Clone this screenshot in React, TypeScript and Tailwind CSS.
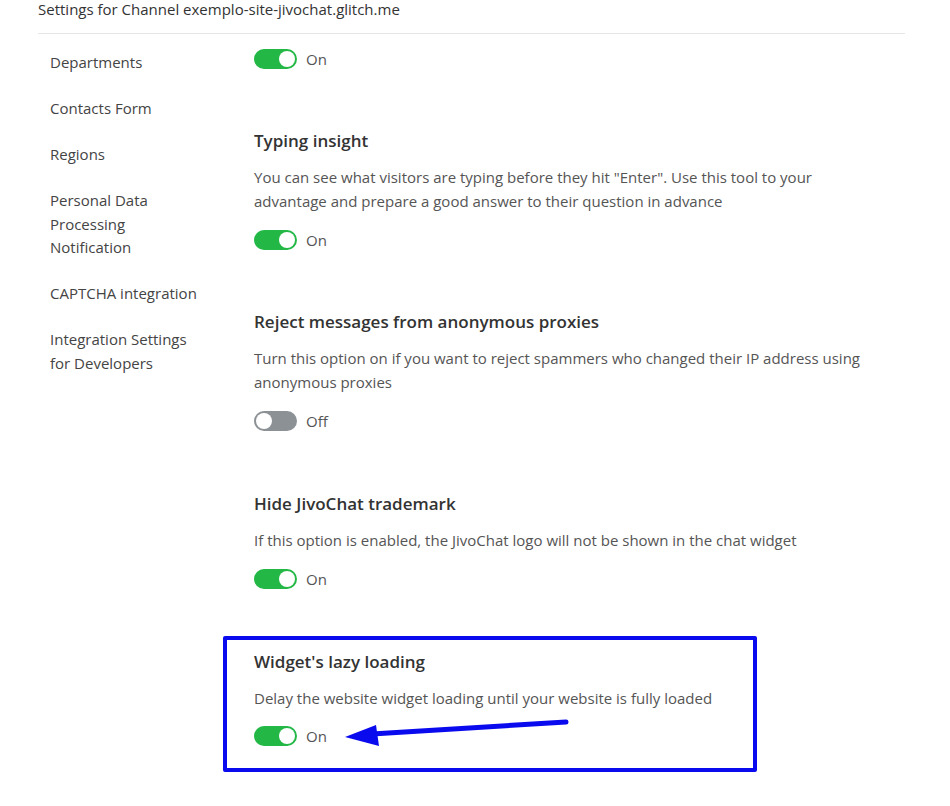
import React from "react";

type ToggleProps = { on: boolean };

const Toggle: React.FC<ToggleProps> = ({ on }) => (
    <div className="flex items-center h-[20px]">
        <div
            className={
                on
                    ? "relative w-[43px] h-[20px] rounded-full bg-[#23b845]"
                    : "relative w-[43px] h-[20px] rounded-full bg-[#8c9196]"
            }
        >
            <div
                className={
                    on
                        ? "absolute top-[2px] right-[2px] w-[16px] h-[16px] rounded-full bg-white"
                        : "absolute top-[2px] left-[2px] w-[16px] h-[16px] rounded-full bg-white"
                }
            />
        </div>
        <span className="ml-[9px] text-[15px] leading-[20px] text-[#555]">{on ? "On" : "Off"}</span>
    </div>
);

const sideItems = [
    ["Departments"],
    ["Contacts Form"],
    ["Regions"],
    ["Personal Data", "Processing", "Notification"],
    ["CAPTCHA integration"],
    ["Integration Settings", "for Developers"],
];

const Section: React.FC<{ title: string; text: string[]; on: boolean }> = ({ title, text, on }) => (
    <div className="flex flex-col">
        <h3 className="text-[17px] leading-[24px] font-semibold text-[#333]">{title}</h3>
        <div className="mt-[12px] text-[15px] leading-[24px] text-[#555]">
            {text.map((t) => (
                <div key={t}>{t}</div>
            ))}
        </div>
        <div className="mt-[16.5px]">
            <Toggle on={on} />
        </div>
    </div>
);

export default function App() {
    return (
        <div
            className="relative w-[950px] h-[806px] bg-white overflow-hidden"
            style={{ fontFamily: '"Open Sans", "Noto Sans", sans-serif' }}
        >
            <div className="mx-[38px] w-[867px] h-[34px] border-b border-[#e6e6e6]">
                <div className="text-[15px] leading-[19px] text-[#333]">
                    Settings for Channel exemplo-site-jivochat.glitch.me
                </div>
            </div>

            <div className="flex ml-[38px]">
                <nav className="w-[216px] pl-[12px] pt-[17px] flex flex-col gap-[22.5px] text-[15px] leading-[23.5px] text-[#444]">
                    {sideItems.map((lines) => (
                        <div key={lines[0]}>
                            {lines.map((l) => (
                                <div key={l}>{l}</div>
                            ))}
                        </div>
                    ))}
                </nav>

                <main className="flex flex-col pt-[15px]">
                    <Toggle on />
                    <div className="mt-[60px]">
                        <Section
                            title="Typing insight"
                            text={[
                                'You can see what visitors are typing before they hit "Enter". Use this tool to your',
                                "advantage and prepare a good answer to their question in advance",
                            ]}
                            on
                        />
                    </div>
                    <div className="mt-[60.5px]">
                        <Section
                            title="Reject messages from anonymous proxies"
                            text={[
                                "Turn this option on if you want to reject spammers who changed their IP address using",
                                "anonymous proxies",
                            ]}
                            on={false}
                        />
                    </div>
                    <div className="mt-[61.5px]">
                        <Section
                            title="Hide JivoChat trademark"
                            text={["If this option is enabled, the JivoChat logo will not be shown in the chat widget"]}
                            on
                        />
                    </div>
                    <div className="mt-[47px] ml-[-31px] w-[534px] border-[4px] border-[#0a0aef] rounded-[2px] pl-[27px] pt-[10px] pb-[22px]">
                        <Section
                            title="Widget's lazy loading"
                            text={["Delay the website widget loading until your website is fully loaded"]}
                            on
                        />
                    </div>
                </main>
            </div>

            {/* annotation arrow */}
            <svg className="absolute left-0 top-0" width="950" height="806" viewBox="0 0 950 806">
                <line x1="566" y1="722" x2="372" y2="734" stroke="#0a0aef" strokeWidth="5" strokeLinecap="round" />
                <polygon points="345,737 376,725 379,746" fill="#0a0aef" />
            </svg>
        </div>
    );
}
